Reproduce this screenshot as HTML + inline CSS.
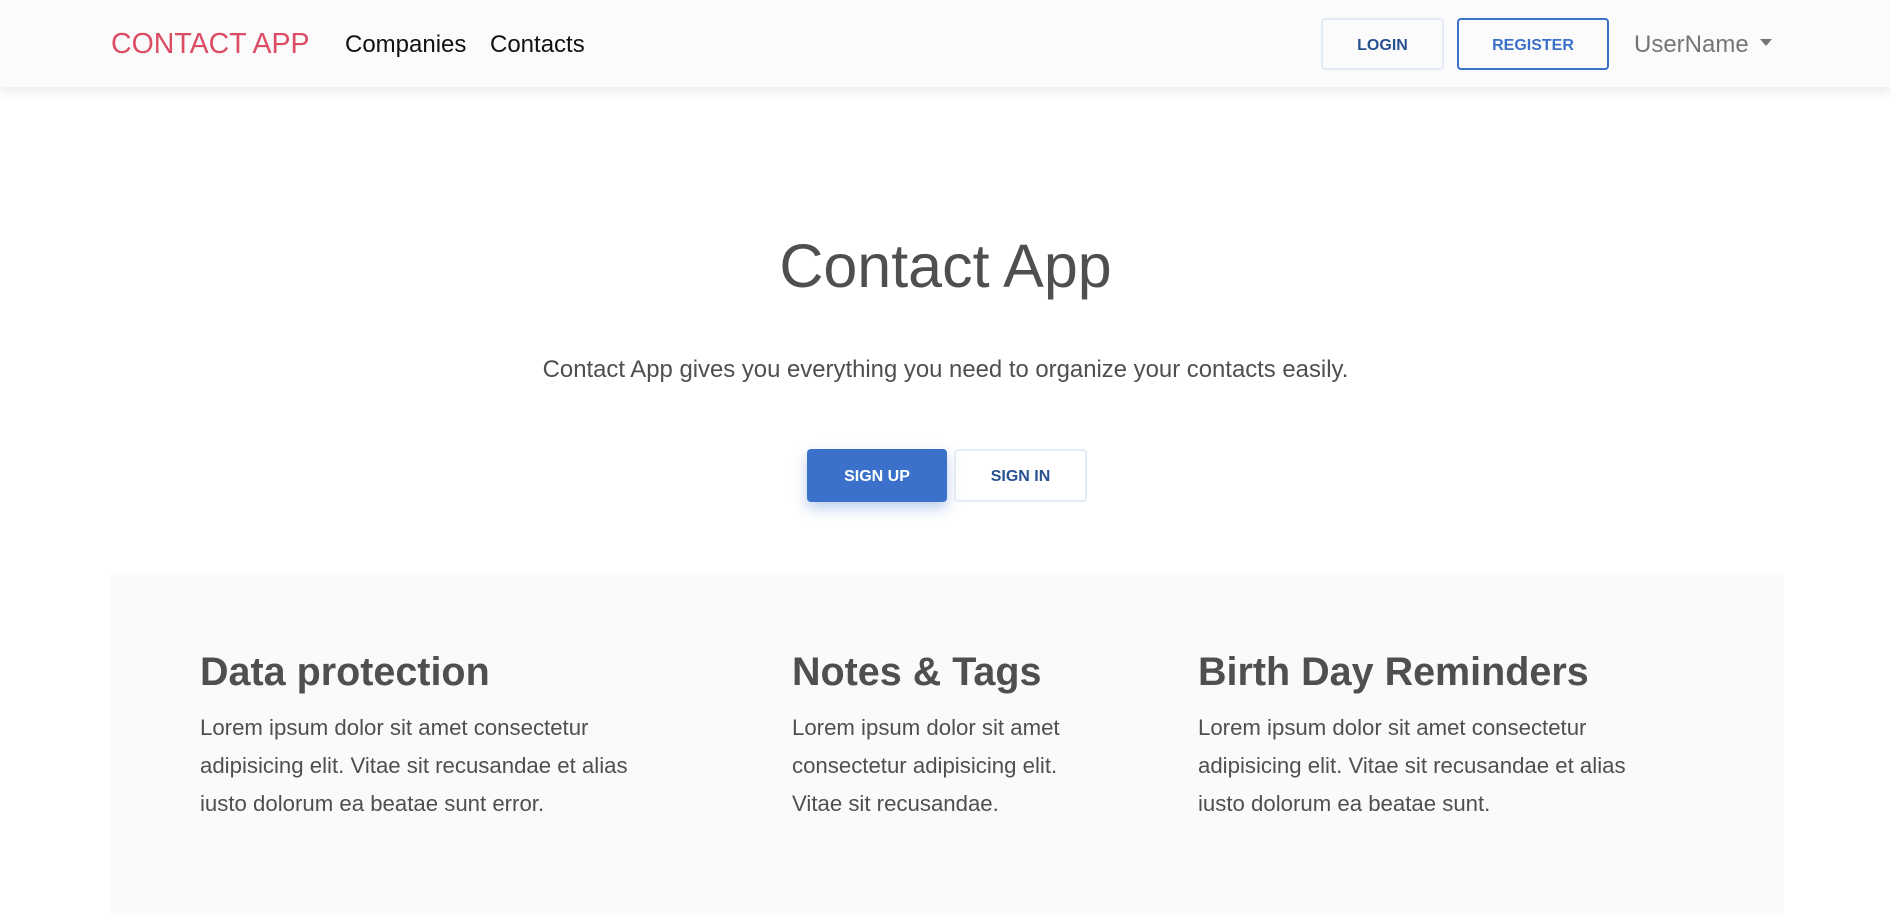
<!DOCTYPE html>
<html><head><style>
*{box-sizing:border-box;margin:0;padding:0}
body{width:1891px;height:907px;overflow:hidden;background:#fff;font-family:"Liberation Sans",sans-serif;color:#4f4f4f;position:relative}
.nav{position:absolute;left:0;top:0;width:1891px;height:87px;background:#fbfbfb;box-shadow:0 4px 12px rgba(0,0,0,.09)}
.abs{position:absolute;white-space:nowrap}
.btn{position:absolute;display:flex;align-items:center;justify-content:center;font-size:16px;font-weight:bold;border-radius:4px;padding-top:3px}
h2{position:absolute;font-size:39.5px;font-weight:bold;color:#4f4f4f;white-space:nowrap}
.p{position:absolute;font-size:22.2px;line-height:38px;color:#4f4f4f}
</style></head><body>
<div class="nav">
<div class="abs" style="left:111px;top:28px;font-size:28.5px;color:#dc4c64">CONTACT APP</div>
<div class="abs" style="left:345px;top:31px;font-size:24px;color:#111">Companies</div>
<div class="abs" style="left:490px;top:31px;font-size:24px;color:#111">Contacts</div>
<div class="btn" style="left:1321px;top:18px;width:123px;height:52px;border:2px solid #e3ebf7;color:#285192">LOGIN</div>
<div class="btn" style="left:1457px;top:18px;width:152px;height:52px;border:2px solid #3b71ca;color:#3b71ca">REGISTER</div>
<div class="abs" style="left:1634px;top:31px;font-size:24px;color:#757575">UserName</div>
<div class="abs" style="left:1760px;top:39px;width:0;height:0;border-left:6px solid transparent;border-right:6px solid transparent;border-top:7px solid #757575"></div>
</div>
<div class="abs" style="left:0;width:1891px;text-align:center;top:231px;font-size:61px;color:#4f4f4f">Contact App</div>
<div class="abs" style="left:0;width:1891px;text-align:center;top:356px;font-size:23.9px;color:#4f4f4f">Contact App gives you everything you need to organize your contacts easily.</div>
<div class="btn" style="left:807px;top:449px;width:140px;height:53px;background:#3b71ca;color:#fff;box-shadow:0 6px 14px rgba(59,113,202,.35)">SIGN UP</div>
<div class="btn" style="left:954px;top:449px;width:133px;height:53px;border:2px solid #e3ebf7;color:#285192">SIGN IN</div>
<div class="abs" style="left:111px;top:575px;width:1673px;height:340px;background:#fafafa"></div>
<h2 style="left:200px;top:650px">Data protection</h2>
<h2 style="left:792px;top:650px">Notes &amp; Tags</h2>
<h2 style="left:1198px;top:650px">Birth Day Reminders</h2>
<div class="p" style="left:200px;top:709px">Lorem ipsum dolor sit amet consectetur<br>adipisicing elit. Vitae sit recusandae et alias<br>iusto dolorum ea beatae sunt error.</div>
<div class="p" style="left:792px;top:709px">Lorem ipsum dolor sit amet<br>consectetur adipisicing elit.<br>Vitae sit recusandae.</div>
<div class="p" style="left:1198px;top:709px">Lorem ipsum dolor sit amet consectetur<br>adipisicing elit. Vitae sit recusandae et alias<br>iusto dolorum ea beatae sunt.</div>
</body></html>
